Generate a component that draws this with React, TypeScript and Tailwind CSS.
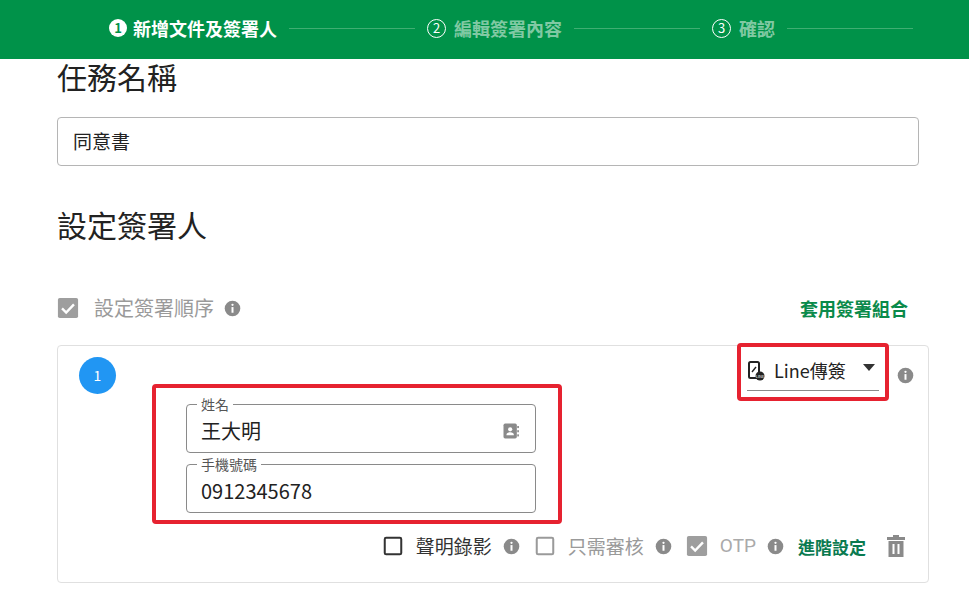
import React from "react";

const Info = ({ c = "#8a8a8a" }: { c?: string }) => (
  <svg width="17" height="17" viewBox="0 0 24 24"><circle cx="12" cy="12" r="11" fill={c} /><rect x="10.6" y="10" width="2.8" height="8" fill="#fff" /><circle cx="12" cy="6.8" r="1.6" fill="#fff" /></svg>
);

const Check = ({ on, c }: { on: boolean; c: string }) =>
  on ? (
    <svg width="22" height="22" viewBox="0 0 24 24"><rect x="1" y="1" width="22" height="22" rx="2" fill={c} /><path d="M5.5 12.5l4.5 4.5 8.5-9" stroke="#fff" strokeWidth="2.6" fill="none" /></svg>
  ) : (
    <svg width="22" height="22" viewBox="0 0 24 24"><rect x="3" y="3" width="18" height="18" rx="1.5" fill="none" stroke={c} strokeWidth="2.2" /></svg>
  );

export default function App() {
  const f = { fontFamily: "'Noto Sans CJK TC','Noto Sans',Roboto,sans-serif" };
  return (
    <div className="w-[969px] h-[590px] overflow-hidden bg-white" style={f}>
      <div className="h-[59px] bg-[#009249] flex items-center pl-[109px] pr-[56px] pb-[3px] gap-3 text-[18px] font-bold">
        <div className="flex items-center gap-[6px] text-white">
          <span className="w-[18px] h-[18px] rounded-full bg-white text-[#009249] text-[13px] flex items-center justify-center">1</span>
          新增文件及簽署人
        </div>
        <div className="flex-1 h-px bg-[#3fae72]" />
        <div className="flex items-center gap-2 text-[#80c9a3]">
          <span className="w-[19px] h-[19px] rounded-full border border-white text-white text-[13px] font-normal flex items-center justify-center">2</span>
          編輯簽署內容
        </div>
        <div className="flex-1 h-px bg-[#3fae72]" />
        <div className="flex items-center gap-2 text-[#80c9a3]">
          <span className="w-[19px] h-[19px] rounded-full border border-white text-white text-[13px] font-normal flex items-center justify-center">3</span>
          確認
        </div>
        <div className="flex-1 h-px bg-[#3fae72]" />
      </div>
      <div className="pl-[57px] pr-[40px]">
        <div className="text-[30px] text-[#222] leading-none -mt-[1px] h-[36px] flex items-center">任務名稱</div>
        <div className="mt-[23px] mr-[10px] h-[49px] border border-[#b5b5b5] rounded flex items-center px-[15px] text-[19px] text-[#222]">同意書</div>
        <div className="mt-[43px] text-[30px] text-[#222] leading-none">設定簽署人</div>
        <div className="mt-[54px] flex items-center pr-[21px]">
          <Check on c="#9e9e9e" />
          <span className="ml-[15px] text-[20px] text-[#9a9a9a]">設定簽署順序</span>
          <span className="ml-[10px]"><Info /></span>
          <span className="ml-auto text-[18px] font-bold text-[#0a8a4a]">套用簽署組合</span>
        </div>
        <div className="mt-[22px] h-[238px] border border-[#e0e0e0] rounded flex pl-[21px] pr-[14px]">
          <div className="mt-[11px] w-[37px] h-[37px] rounded-full bg-[#2196f3] text-white text-[14px] flex items-center justify-center">1</div>
          <div className="flex flex-col flex-1">
            <div className="flex">
              <div className="mt-[38px] ml-[36px] w-[410px] border-[4px] border-[#e62230] rounded-sm pt-[16px] pl-[30px] pr-[22px] pb-[7px] flex flex-col gap-[11px]">
                {[["姓名", "王大明", true], ["手機號碼", "0912345678", false]].map(([l, v, ic]) => (
                  <div key={l as string} className="relative h-[49px] border border-[#8a8a8a] rounded flex items-center px-[14px] text-[20px] text-[#222]">
                    <span className="absolute -top-[9px] left-[10px] bg-white px-[4px] text-[14px] leading-[16px] text-[#555]">{l}</span>
                    <span className="mt-[4px]">{v}</span>
                    {ic && (
                      <svg className="ml-auto mt-[4px]" width="20" height="20" viewBox="0 0 24 24" fill="#8a8a8a"><rect x="3" y="3" width="16" height="18" rx="2" /><circle cx="11" cy="10" r="2.5" fill="#fff" /><path d="M6.5 17c0-2.5 2-3.5 4.5-3.5s4.5 1 4.5 3.5z" fill="#fff" /><rect x="19.5" y="6" width="2" height="2.5" /><rect x="19.5" y="11" width="2" height="2.5" /><rect x="19.5" y="16" width="2" height="2.5" /></svg>
                    )}
                  </div>
                ))}
              </div>
              <div className="ml-auto flex items-start">
                <div className="-mt-[3px] w-[152px] h-[58px] border-[4px] border-[#e62230] rounded-sm px-[6px] pt-[10px]">
                  <div className="flex items-center border-b border-[#8a8a8a] pb-[6px] pr-[4px]">
                    <svg width="18" height="20" viewBox="0 0 18 20"><rect x="2" y="1" width="10" height="16" rx="1.5" fill="none" stroke="#222" strokeWidth="2" /><path d="M5 11l4-5" stroke="#222" strokeWidth="1.4" /><circle cx="13" cy="15" r="4.5" fill="#222" /><text x="13" y="16.5" fontSize="4" fill="#fff" textAnchor="middle">LINE</text></svg>
                    <span className="ml-[9px] text-[18px] text-[#222]">Line傳簽</span>
                    <svg className="ml-auto -mt-[6px]" width="12" height="7" viewBox="0 0 12 7"><path d="M0 0h12L6 7z" fill="#333" /></svg>
                  </div>
                </div>
                <span className="ml-[8px] mt-[21px]"><Info /></span>
              </div>
            </div>
            <div className="mt-[8px] flex items-center justify-end text-[19px] pr-[8px]">
              <Check on={false} c="#333" />
              <span className="ml-[12px] text-[#333]">聲明錄影</span>
              <span className="ml-[11px]"><Info /></span>
              <span className="ml-[14px]"><Check on={false} c="#9a9a9a" /></span>
              <span className="ml-[12px] text-[#9a9a9a]">只需審核</span>
              <span className="ml-[11px]"><Info /></span>
              <span className="ml-[14px]"><Check on c="#9e9e9e" /></span>
              <span className="ml-[12px] text-[#aaa]" style={{ fontFamily: "Roboto,sans-serif" }}>OTP</span>
              <span className="ml-[11px]"><Info /></span>
              <span className="ml-[14px] text-[17px] font-bold text-[#0a7a50]">進階設定</span>
              <svg className="ml-[20px]" width="20" height="22" viewBox="0 0 20 22" fill="#8a8a8a"><rect x="1" y="2" width="18" height="3" /><rect x="7" y="0" width="6" height="3" /><path d="M2.5 6h15v16h-15z" /><rect x="6.5" y="9" width="2" height="10" fill="#fff" /><rect x="11.5" y="9" width="2" height="10" fill="#fff" /></svg>
            </div>
          </div>
        </div>
      </div>
    </div>
  );
}
